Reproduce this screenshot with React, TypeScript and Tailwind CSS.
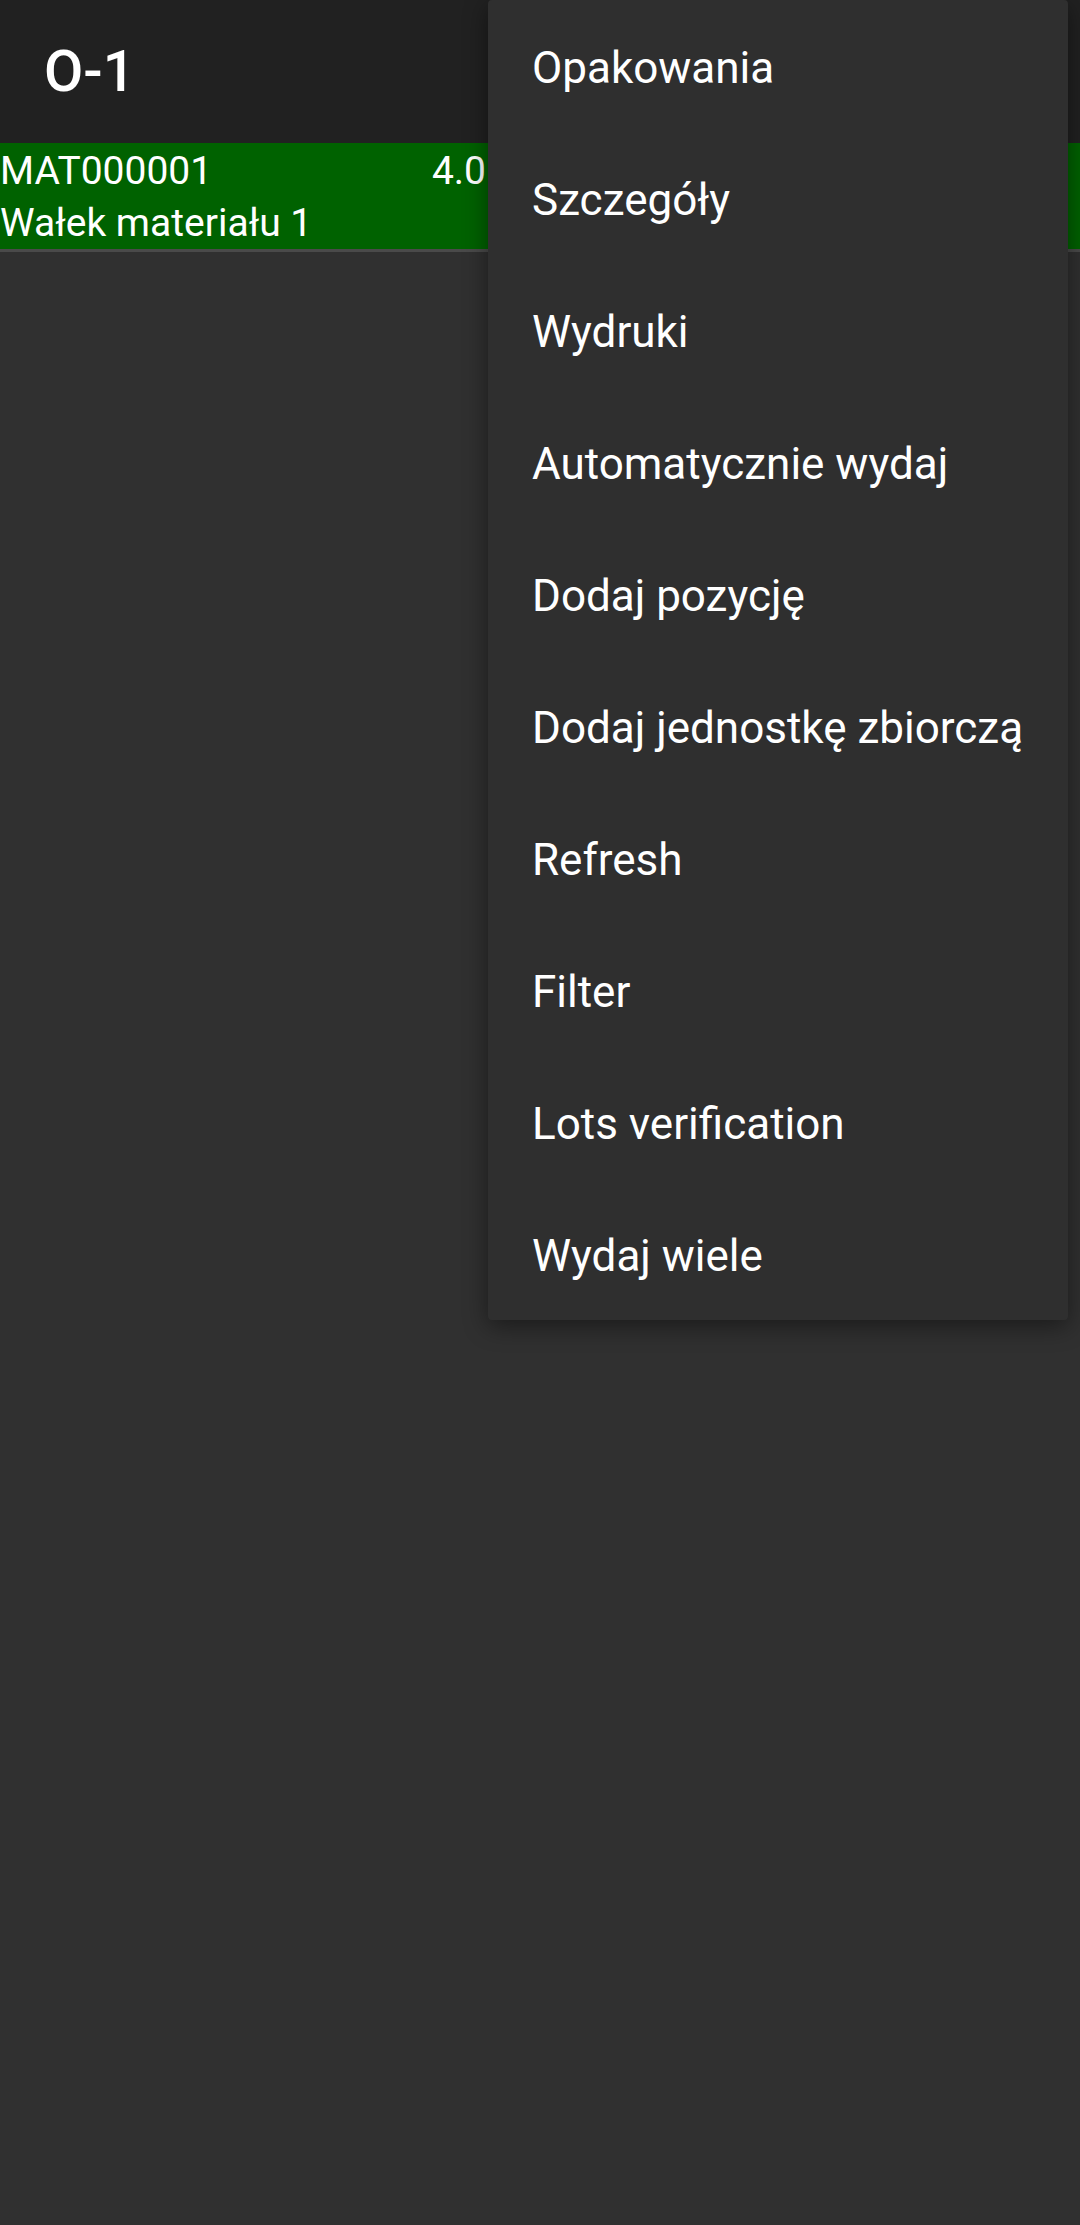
const menuItems: string[] = [
    "Opakowania",
    "Szczegóły",
    "Wydruki",
    "Automatycznie wydaj",
    "Dodaj pozycję",
    "Dodaj jednostkę zbiorczą",
    "Refresh",
    "Filter",
    "Lots verification",
    "Wydaj wiele",
]

function App() {
    return (
        <div className="relative min-h-[2225px] w-full bg-[#303030] font-['Roboto',_'Noto_Sans',_sans-serif] text-white">
            <div id="toolbar" className="flex h-[143px] items-center bg-[#212121] px-[44px]">
                <span className="text-[57px] font-medium leading-none">O-1</span>
            </div>

            <div id="row" className="h-[109px] border-b-[3px] border-[#4a4a4a] bg-[#006200] pt-[2px] text-[39px] leading-[52px]">
                <div className="flex w-[486px] justify-between">
                    <span>MAT000001</span>
                    <span>4.0</span>
                </div>
                <div>Wałek materiału 1</div>
            </div>

            <div id="menu" className="absolute left-[488px] top-0 w-[580px] rounded-[4px] bg-[#2f2f2f] shadow-[0_6px_24px_rgba(0,0,0,0.45)]">
                {menuItems.map((item) => (
                    <div key={item} className="flex h-[132px] items-center whitespace-nowrap px-[44px] pt-[3px] text-[44px] leading-none">
                        {item}
                    </div>
                ))}
            </div>
        </div>
    )
}

export default App
